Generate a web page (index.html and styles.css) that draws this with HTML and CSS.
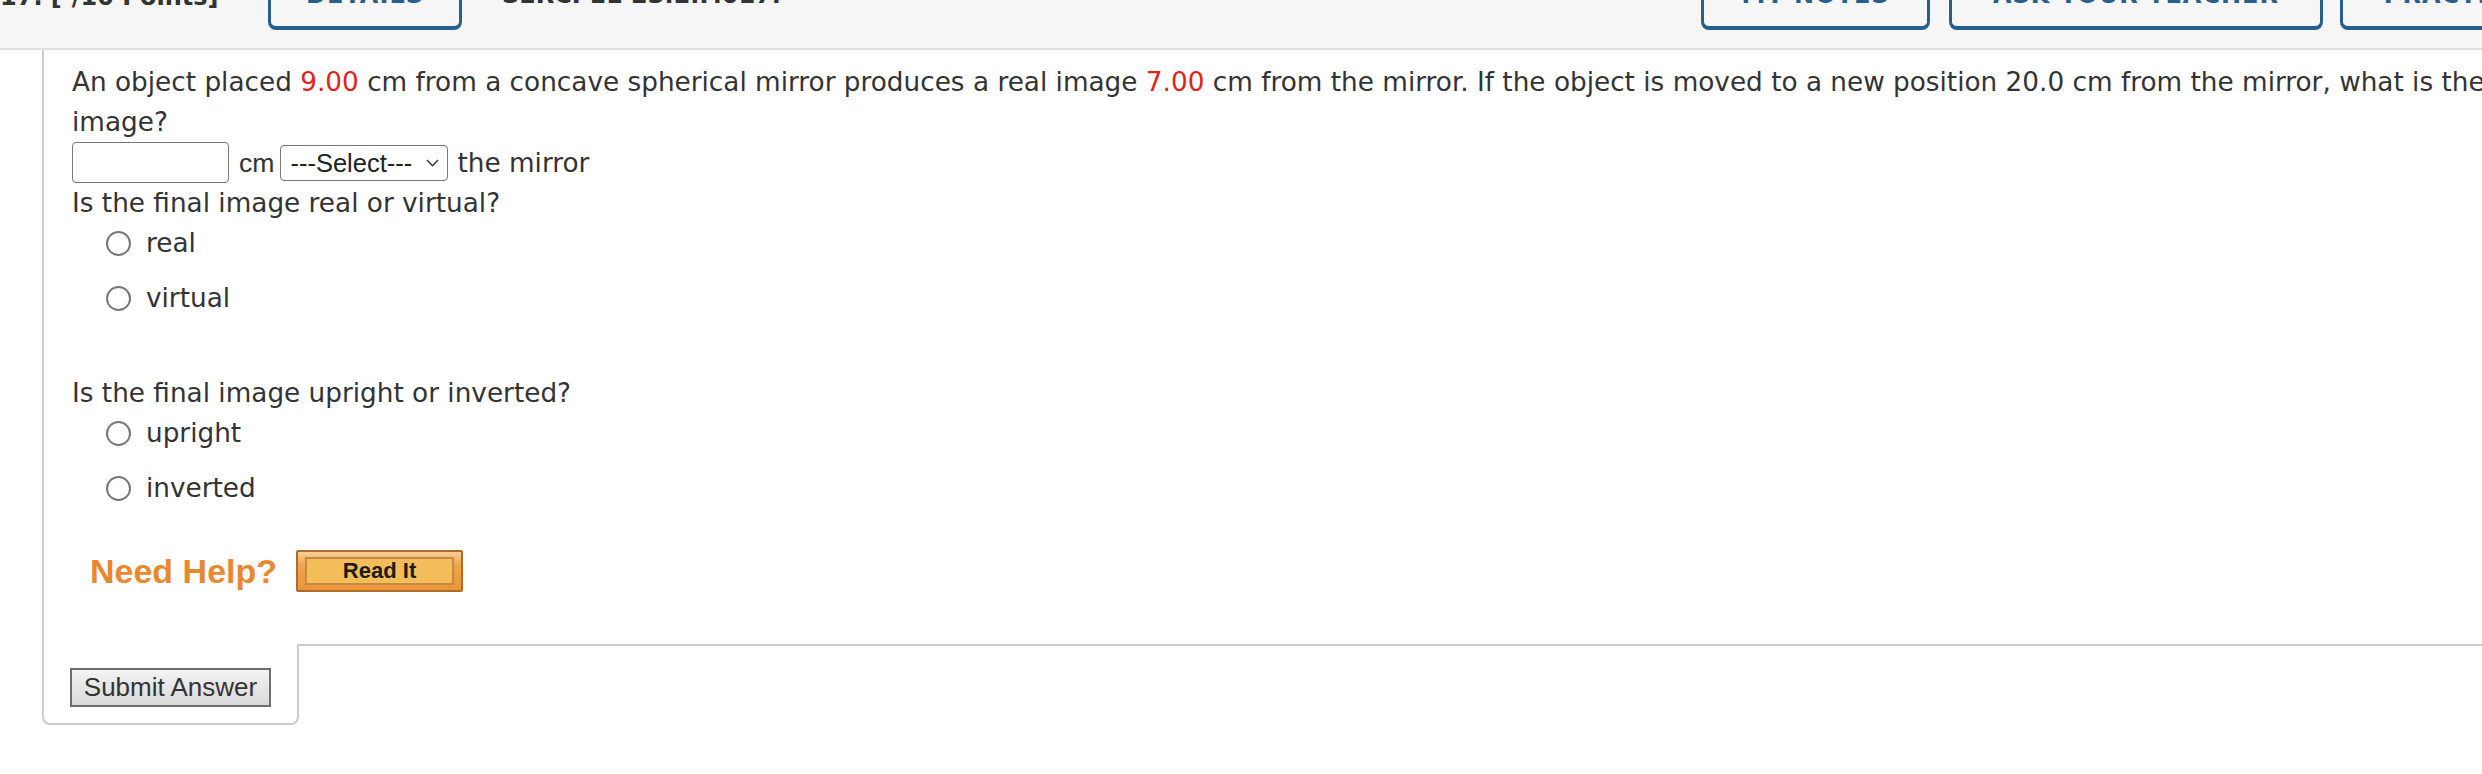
FILE: index.html
```html
<!DOCTYPE html>
<html lang="en">
<head>
<meta charset="utf-8">
<title>Question</title>
<link rel="stylesheet" href="styles.css">
</head>
<body>
<div class="page">
  <header class="qhead">
    <span class="qnum">17. [-/10 Points]</span>
    <button class="tab-btn btn-details" type="button">DETAILS</button>
    <span class="qref">SERCP11 23.2.P.017.</span>
    <button class="tab-btn btn-notes" type="button">MY NOTES</button>
    <button class="tab-btn btn-ask" type="button">ASK YOUR TEACHER</button>
    <button class="tab-btn btn-practice" type="button">PRACTICE ANOTHER</button>
  </header>

  <section class="card">
    <p class="prompt">An object placed <span class="num">9.00</span> cm from a concave spherical mirror produces a real image <span class="num">7.00</span> cm from the mirror. If the object is moved to a new position 20.0 cm from the mirror, what is the location of the final<br>image?</p>

    <div class="answer-row">
      <input class="num-input" type="text" aria-label="distance">
      <span class="unit">cm</span>
      <span class="select-wrap">
        <select class="loc-select" aria-label="location">
          <option>---Select---</option>
          <option>in front of</option>
          <option>behind</option>
        </select>
        <svg class="chev" viewBox="0 0 13 8" width="13" height="8" aria-hidden="true"><path d="M1 1 L6.5 6.7 L12 1" fill="none" stroke="#333" stroke-width="1.4"/></svg>
      </span>
      <span class="after">the mirror</span>
    </div>

    <p class="question">Is the final image real or virtual?</p>
    <ul class="options">
      <li><label class="opt"><input type="radio" name="q1"><span>real</span></label></li>
      <li><label class="opt"><input type="radio" name="q1"><span>virtual</span></label></li>
    </ul>

    <p class="question q2">Is the final image upright or inverted?</p>
    <ul class="options">
      <li><label class="opt"><input type="radio" name="q2"><span>upright</span></label></li>
      <li><label class="opt"><input type="radio" name="q2"><span>inverted</span></label></li>
    </ul>

    <div class="help-row">
      <span class="need-help">Need Help?</span>
      <button class="read-it" type="button"><span class="read-it-inner">Read It</span></button>
    </div>
  </section>

  <div class="submit-tab">
    <button class="submit" type="button">Submit Answer</button>
  </div>
</div>
</body>
</html>
```

FILE: styles.css
```css
html, body {
  margin: 0;
  padding: 0;
  overflow: hidden;
  background: #ffffff;
}

body {
  font-family: "DejaVu Sans", Verdana, sans-serif;
  color: #333333;
}

.page {
  width: 2740px;
}

/* ---------- header strip ---------- */
.qhead {
  box-sizing: content-box;
  display: flex;
  align-items: flex-end;
  height: 30px;
  padding: 0 26px 18px 0;
  background: #f6f6f6;
  border-bottom: 2px solid #e0e0e0;
  overflow: hidden;
}

.qnum,
.qref {
  flex: none;
  font-weight: bold;
  font-size: 24px;
  line-height: normal;
  color: #333333;
  white-space: nowrap;
}

.qnum {
  width: 268px;
  margin-bottom: 19px;
}

.qref {
  margin-left: 40px;
  margin-bottom: 21px;
}

.tab-btn {
  flex: none;
  box-sizing: border-box;
  height: 66px;
  display: flex;
  align-items: flex-end;
  justify-content: center;
  padding: 0 0 17px;
  background: transparent;
  border: 3px solid #27608f;
  border-bottom-width: 4px;
  border-radius: 8px;
  font-family: "DejaVu Sans", Verdana, sans-serif;
  font-weight: bold;
  font-size: 24px;
  line-height: normal;
  letter-spacing: 1px;
  color: #27608f;
}

.btn-details { width: 194px; }
.btn-notes { width: 229px; margin-left: auto; }
.btn-ask { width: 374px; margin-left: 19px; }
.btn-practice { width: 374px; margin-left: 17px; }

/* ---------- question card ---------- */
.card {
  margin-left: 42px;
  border-left: 2px solid #cccccc;
  border-bottom: 2px solid #cccccc;
  padding: 12px 0 52px 28px;
  font-size: 26.3px;
  line-height: 40px;
}

.prompt,
.question {
  margin: 0;
  white-space: nowrap;
}

.num {
  color: #e2231a;
}

.answer-row {
  display: flex;
  align-items: center;
  height: 41px;
}

.num-input {
  box-sizing: border-box;
  width: 157px;
  height: 41px;
  margin: 0;
  padding: 0 6px;
  border: 1px solid #7a7a7a;
  border-radius: 4px;
  background: #ffffff;
  font: 24px "Liberation Sans", Arial, sans-serif;
}

.unit {
  margin-left: 10px;
  font-family: "Liberation Sans", Arial, sans-serif;
  font-size: 26.6px;
}

.select-wrap {
  position: relative;
  display: inline-flex;
  margin-left: 6px;
}

.loc-select {
  appearance: none;
  -webkit-appearance: none;
  box-sizing: border-box;
  width: 168px;
  height: 36px;
  margin: 0;
  padding: 0 0 0 9px;
  border: 1px solid #7a7a7a;
  border-radius: 4px;
  background: #ffffff;
  font: 25.5px "Liberation Sans", Arial, sans-serif;
  color: #222222;
}

.chev {
  position: absolute;
  right: 9px;
  top: 14px;
  pointer-events: none;
}

.after {
  margin-left: 9px;
}

.options {
  list-style: none;
  margin: 0;
  padding: 0 0 0 34px;
}

.options li + li {
  margin-top: 15px;
}

.opt {
  display: flex;
  align-items: center;
  height: 40px;
}

.opt input {
  appearance: none;
  -webkit-appearance: none;
  box-sizing: border-box;
  width: 25px;
  height: 25px;
  margin: 0 15px 0 0;
  border: 2px solid #777777;
  border-radius: 50%;
  background: #ffffff;
}

.q2 {
  margin-top: 55px;
}

/* ---------- help row ---------- */
.help-row {
  display: flex;
  align-items: center;
  height: 42px;
  margin-top: 42px;
  padding-left: 18px;
}

.need-help {
  margin-right: 19px;
  font-family: "Liberation Sans", Arial, sans-serif;
  font-weight: bold;
  font-size: 34px;
  line-height: normal;
  color: #e8892f;
}

.read-it {
  box-sizing: border-box;
  width: 167px;
  height: 42px;
  margin: 0;
  padding: 5px 7px;
  border: 2px solid #a96e2f;
  border-radius: 2px;
  background: linear-gradient(#f8cf98 0%, #f0a24c 35%, #ec9537 100%);
}

.read-it-inner {
  display: block;
  box-sizing: border-box;
  height: 28px;
  border: 2px solid #c68947;
  background: #f3bd59;
  font-family: "Liberation Sans", Arial, sans-serif;
  font-weight: bold;
  font-size: 22px;
  line-height: 24px;
  color: #1c1c1c;
  text-align: center;
}

/* ---------- submit tab ---------- */
.submit-tab {
  box-sizing: border-box;
  width: 257px;
  margin: -2px 0 0 42px;
  padding: 24px 0 16px 26px;
  border: 2px solid #cccccc;
  border-top: none;
  border-radius: 0 0 8px 8px;
  background: #ffffff;
}

.submit {
  display: block;
  box-sizing: border-box;
  width: 201px;
  height: 39px;
  margin: 0;
  padding: 0;
  border: 2px solid #6e6e6e;
  background: linear-gradient(#f3f3f3, #d9d9d9);
  font-family: "Liberation Sans", Arial, sans-serif;
  font-size: 26px;
  color: #333333;
}
```
